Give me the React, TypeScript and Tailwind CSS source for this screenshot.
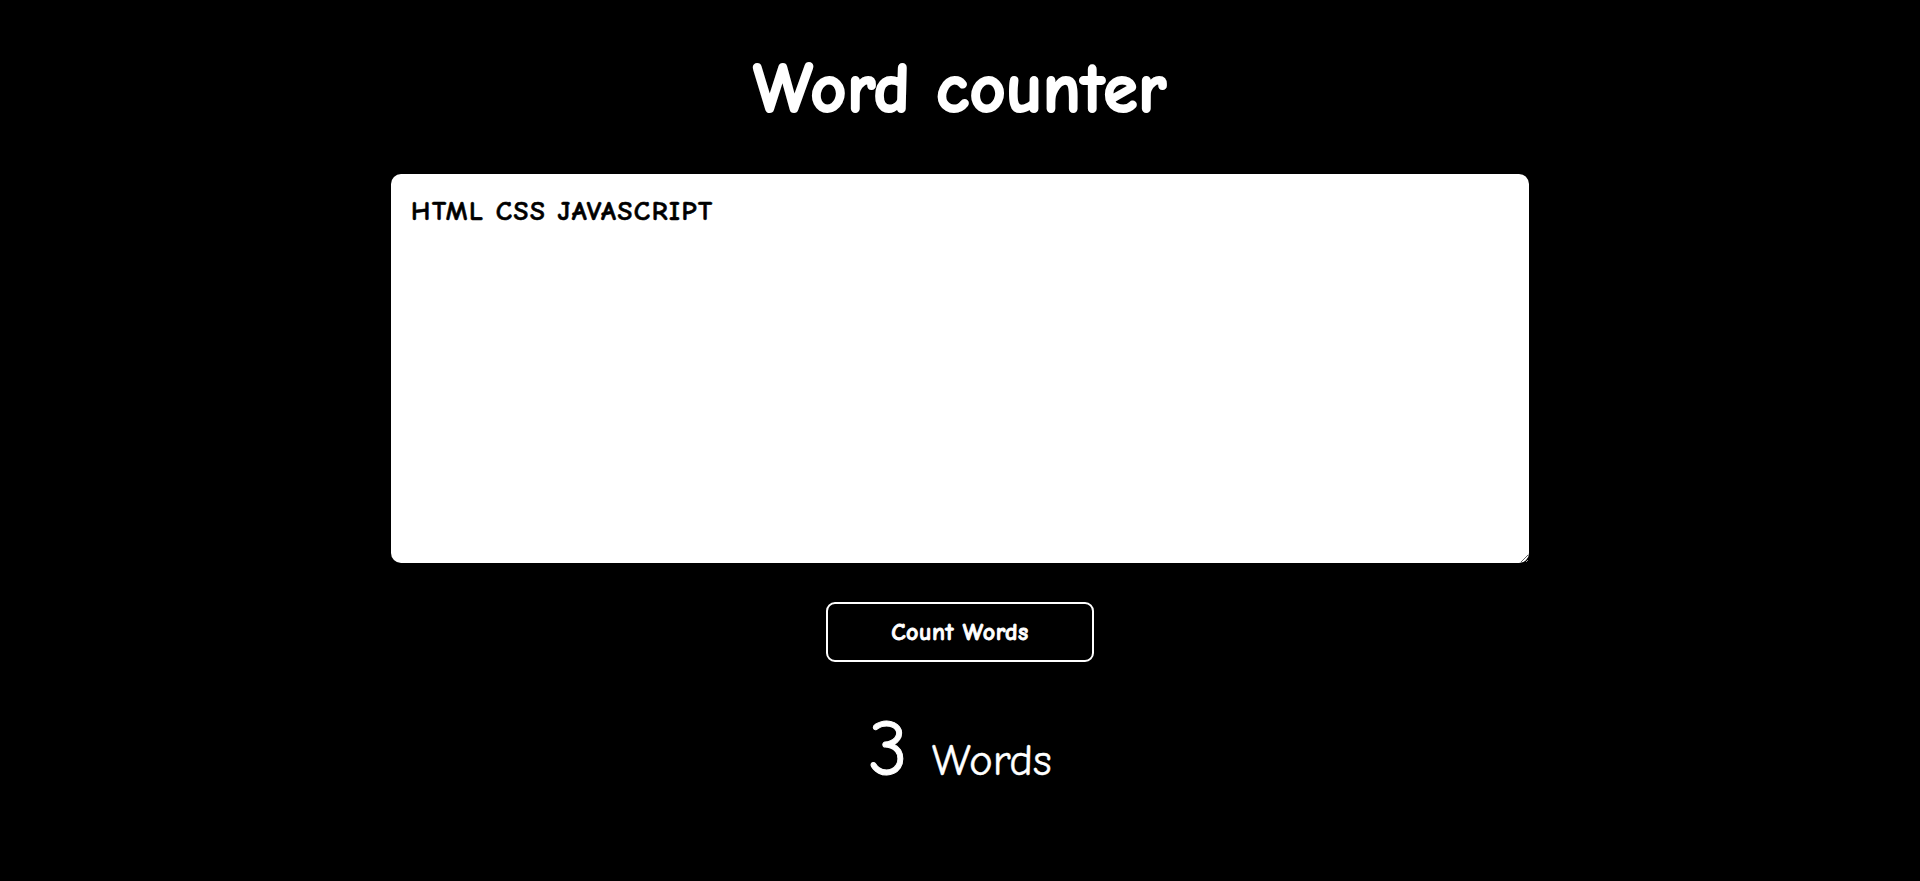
import React, { useState } from "react";

export default function App() {
  const [text, setText] = useState("HTML CSS JAVASCRIPT");
  const [count, setCount] = useState(3);
  const font = { fontFamily: '"Comic Sans MS", "Comic Neue", "Open Sans", "Noto Sans", sans-serif' };
  return (
    <div className="min-h-[881px] w-full bg-black text-white flex flex-col items-center" style={font}>
      <h1 className="mt-[50px] text-[70px] font-bold leading-[80px] tracking-[0.5px] [-webkit-text-stroke:2px_white]">Word counter</h1>
      <textarea
        value={text}
        onChange={(e) => setText(e.target.value)}
        className="mt-[44px] w-[1138px] h-[389px] rounded-[10px] bg-white text-black text-[27px] font-bold tracking-[1.6px] px-[20px] py-[18px] outline-none [-webkit-text-stroke:0.6px_black]"
        style={font}
      />
      <button
        onClick={() => setCount(text.trim() ? text.trim().split(/\s+/).length : 0)}
        className="mt-[39px] w-[268px] h-[60px] rounded-[9px] border-2 border-white bg-black text-white text-[24px] font-bold tracking-[0.5px] [-webkit-text-stroke:0.8px_white]"
        style={font}
      >
        Count Words
      </button>
      <div className="mt-[46px] flex items-baseline gap-[24px]">
        <span className="text-[78px] leading-[84px] [-webkit-text-stroke:1px_white]">{count}</span>
        <span className="text-[45px] [-webkit-text-stroke:0.4px_white]">Words</span>
      </div>
    </div>
  );
}
